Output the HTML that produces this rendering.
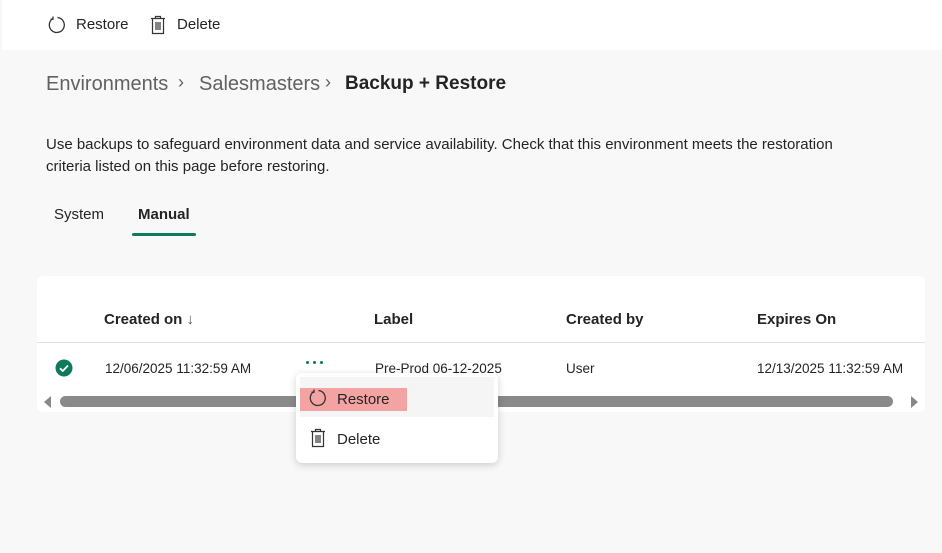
<!DOCTYPE html>
<html><head><style>
*{box-sizing:border-box;margin:0;padding:0}
body{width:942px;height:553px;background:#f8f8f8;font-family:"Liberation Sans",sans-serif;color:#242424;position:relative;overflow:hidden}
.abs{position:absolute;white-space:nowrap}
.top{position:absolute;left:2px;top:0;width:940px;height:50px;background:#fff}
.card{position:absolute;left:37px;top:276px;width:888px;height:136px;background:#fff;border-radius:6px}
</style></head><body>
<div class="top"></div>
<svg class="abs" style="left:47px;top:15px" width="20" height="20" viewBox="0 0 20 20"><path d="M6 3.5A7.5 7.5 0 1 0 10.5 2.5" fill="none" stroke="#333" stroke-width="1.3"/><path d="M6 1.5V4.2H3.5" fill="none" stroke="#333" stroke-width="1.3"/></svg>
<div class="abs" style="left:76px;top:16px;font-size:15px">Restore</div>
<svg class="abs" style="left:150px;top:15px" width="16" height="20" viewBox="0 0 16 20"><path d="M1 3.5H15M5.5 3.5V1.5H10.5V3.5M2.5 3.5V18.5H13.5V3.5M6 7V15M8 7V15M10 7V15" fill="none" stroke="#333" stroke-width="1.2"/></svg>
<div class="abs" style="left:177px;top:16px;font-size:15px">Delete</div>

<div class="abs" style="left:46px;top:73px;font-size:20px;color:#616161">Environments</div>
<div class="abs" style="left:178px;top:72px;font-size:18px;color:#616161">&#8250;</div>
<div class="abs" style="left:199px;top:73px;font-size:20px;color:#616161">Salesmasters</div>
<div class="abs" style="left:325px;top:72px;font-size:18px;color:#616161">&#8250;</div>
<div class="abs" style="left:345px;top:73px;font-size:19px;font-weight:bold">Backup + Restore</div>

<div class="abs" style="left:46px;top:134px;font-size:15px;line-height:22px;white-space:normal;width:835px">Use backups to safeguard environment data and service availability. Check that this environment meets the restoration criteria listed on this page before restoring.</div>

<div class="abs" style="left:54px;top:206px;font-size:15px">System</div>
<div class="abs" style="left:138px;top:206px;font-size:15px;font-weight:bold">Manual</div>
<div class="abs" style="left:132px;top:233px;width:64px;height:3px;background:#0e7a5c;border-radius:2px"></div>

<div class="card"></div>
<div class="abs" style="left:37px;top:342px;width:888px;height:1px;background:#e0e0e0"></div>
<div class="abs" style="left:104px;top:311px;font-size:15px;font-weight:bold">Created on <span style="font-weight:normal;color:#555">&#8595;</span></div>
<div class="abs" style="left:374px;top:311px;font-size:15px;font-weight:bold">Label</div>
<div class="abs" style="left:566px;top:311px;font-size:15px;font-weight:bold">Created by</div>
<div class="abs" style="left:757px;top:311px;font-size:15px;font-weight:bold">Expires On</div>

<svg class="abs" style="left:55px;top:359px" width="18" height="18" viewBox="0 0 18 18"><circle cx="9" cy="9" r="8.5" fill="#0e7a5c"/><path d="M5 9.3L7.8 12L13 6.5" fill="none" stroke="#fff" stroke-width="1.8"/></svg>
<div class="abs" style="left:105px;top:361px;font-size:13.5px">12/06/2025 11:32:59 AM</div>
<div class="abs" style="left:306px;top:361px;width:3px;height:3px;background:#0e7a5c;border-radius:50%"></div>
<div class="abs" style="left:313px;top:361px;width:3px;height:3px;background:#0e7a5c;border-radius:50%"></div>
<div class="abs" style="left:320px;top:361px;width:3px;height:3px;background:#0e7a5c;border-radius:50%"></div>
<div class="abs" style="left:375px;top:361px;font-size:13.5px">Pre-Prod 06-12-2025</div>
<div class="abs" style="left:566px;top:361px;font-size:13.5px">User</div>
<div class="abs" style="left:757px;top:361px;font-size:13.5px">12/13/2025 11:32:59 AM</div>

<div class="abs" style="left:44px;top:396px;width:0;height:0;border-top:6px solid transparent;border-bottom:6px solid transparent;border-right:7px solid #888"></div>
<div class="abs" style="left:60px;top:396px;width:833px;height:11px;background:#8a8a8a;border-radius:6px"></div>
<div class="abs" style="left:911px;top:396px;width:0;height:0;border-top:6px solid transparent;border-bottom:6px solid transparent;border-left:7px solid #888"></div>

<div class="abs" style="left:296px;top:373px;width:202px;height:90px;background:#fff;border-radius:6px;box-shadow:0 2px 8px rgba(0,0,0,.18)"></div>
<div class="abs" style="left:300px;top:377px;width:194px;height:40px;background:#f5f5f5"></div>
<div class="abs" style="left:300px;top:388px;width:107px;height:23px;background:#f4a3a3"></div>
<svg class="abs" style="left:308px;top:388px" width="20" height="20" viewBox="0 0 20 20"><path d="M6 3.5A7.5 7.5 0 1 0 10.5 2.5" fill="none" stroke="#333" stroke-width="1.3"/><path d="M6 1.5V4.2H3.5" fill="none" stroke="#333" stroke-width="1.3"/></svg>
<div class="abs" style="left:337px;top:391px;font-size:15px">Restore</div>
<svg class="abs" style="left:310px;top:428px" width="16" height="20" viewBox="0 0 16 20"><path d="M1 3.5H15M5.5 3.5V1.5H10.5V3.5M2.5 3.5V18.5H13.5V3.5M6 7V15M8 7V15M10 7V15" fill="none" stroke="#333" stroke-width="1.2"/></svg>
<div class="abs" style="left:337px;top:431px;font-size:15px">Delete</div>
</body></html>
